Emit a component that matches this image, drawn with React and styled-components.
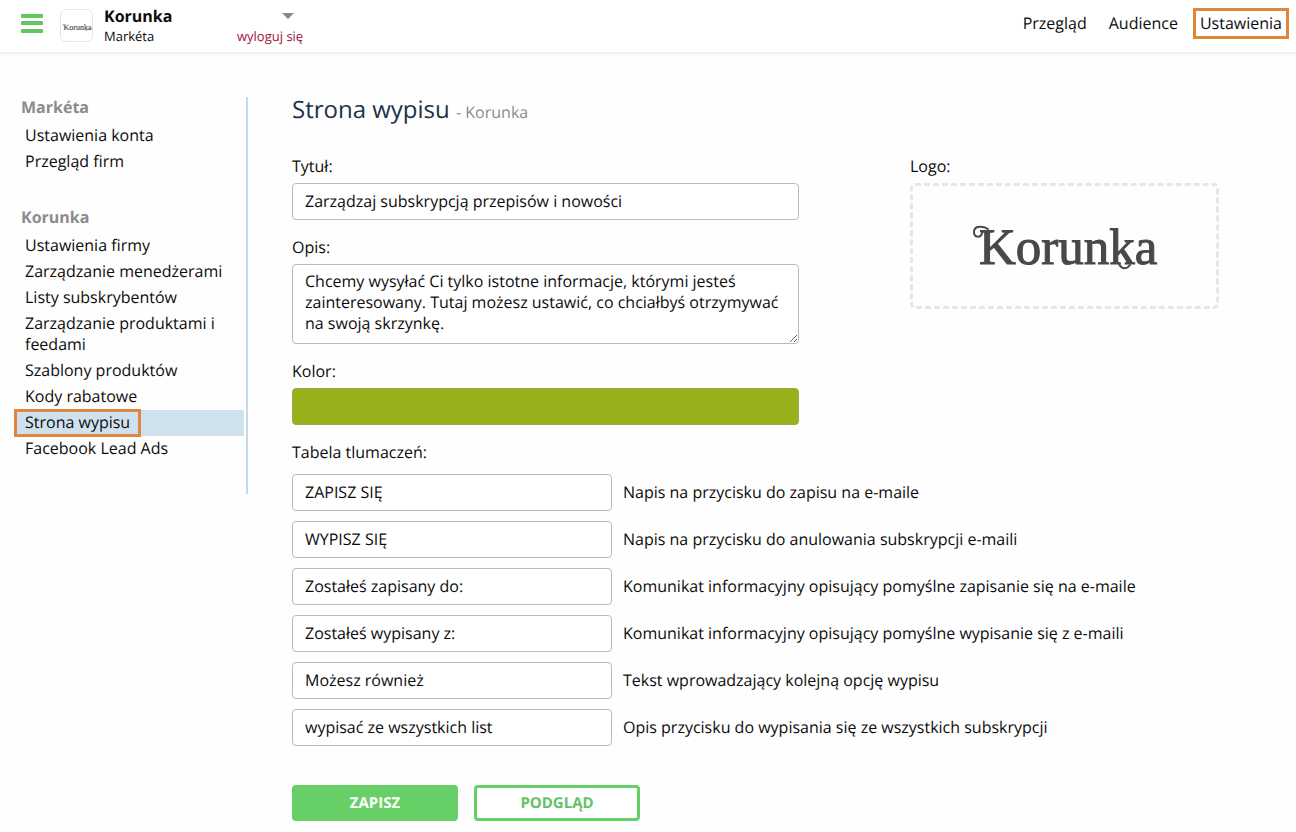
import React from 'react';
import styled, { createGlobalStyle } from 'styled-components';

const accountLinks = ['Ustawienia konta', 'Przegląd firm'];

const companyLinks = [
  'Ustawienia firmy',
  'Zarządzanie menedżerami',
  'Listy subskrybentów',
  'Zarządzanie produktami i feedami',
  'Szablony produktów',
  'Kody rabatowe',
  'Strona wypisu',
  'Facebook Lead Ads',
];

const translations = [
  { id: 'subscribe', value: 'ZAPISZ SIĘ', label: 'Napis na przycisku do zapisu na e-maile' },
  { id: 'unsubscribe', value: 'WYPISZ SIĘ', label: 'Napis na przycisku do anulowania subskrypcji e-maili' },
  { id: 'subscribed', value: 'Zostałeś zapisany do:', label: 'Komunikat informacyjny opisujący pomyślne zapisanie się na e-maile' },
  { id: 'unsubscribed', value: 'Zostałeś wypisany z:', label: 'Komunikat informacyjny opisujący pomyślne wypisanie się z e-maili' },
  { id: 'also', value: 'Możesz również', label: 'Tekst wprowadzający kolejną opcję wypisu' },
  { id: 'all', value: 'wypisać ze wszystkich list', label: 'Opis przycisku do wypisania się ze wszystkich subskrypcji' },
];

function KorunkaLogo({ width }) {
  return (
    <svg width={width} viewBox="0 0 190 70" role="img" aria-label="Korunka">
      <text x="9" y="53" fontFamily="'Liberation Serif', serif" fontSize="51" fill="#484848" stroke="#484848" strokeWidth="1">
        Korunka
      </text>
      <g fill="none" stroke="#484848" strokeWidth="2" strokeLinecap="round">
        <path d="M18 18C13 15 4 14 4 21c0 6 7 6 8 1" />
        <path d="M149 53c3 6 8 5 11 1" />
      </g>
    </svg>
  );
}

function MenuSection({ title, links }) {
  return (
    <Section>
      <SectionTitle>{title}</SectionTitle>
      {links.map(link => (
        <SideLink href="#" key={link} $active={link === 'Strona wypisu'}>
          {link === 'Strona wypisu' ? <Marked>{link}</Marked> : link}
        </SideLink>
      ))}
    </Section>
  );
}

export default function App() {
  return (
    <>
      <GlobalStyle />
      <Header>
        <MenuButton aria-label="Menu">
          <svg width="22" height="19" viewBox="0 0 22 19" fill="#62c462">
            <rect width="22" height="4" rx="1" />
            <rect y="7" width="22" height="4" rx="1" />
            <rect y="15" width="22" height="4" rx="1" />
          </svg>
        </MenuButton>
        <Avatar><KorunkaLogo width={30} /></Avatar>
        <Account>
          <strong>Korunka</strong>
          <span>Markéta</span>
        </Account>
        <Logout>
          <AccountToggle aria-label="Zmień konto">
            <svg width="12" height="6" viewBox="0 0 12 6"><path d="M0 0h12L6 6z" fill="#888" /></svg>
          </AccountToggle>
          <a href="#">wyloguj się</a>
        </Logout>
        <Nav>
          <NavLink href="#">Przegląd</NavLink>
          <NavLink href="#">Audience</NavLink>
          <NavLink href="#" $active>Ustawienia</NavLink>
        </Nav>
      </Header>

      <Page>
        <Sidebar>
          <MenuSection title="Markéta" links={accountLinks} />
          <MenuSection title="Korunka" links={companyLinks} />
        </Sidebar>

        <Content>
          <Title>Strona wypisu <small>- Korunka</small></Title>
          <Columns>
            <Fields>
              <Field>
                <label htmlFor="title">Tytuł:</label>
                <Input id="title" defaultValue="Zarządzaj subskrypcją przepisów i nowości" />
              </Field>
              <Field>
                <label htmlFor="description">Opis:</label>
                <TextArea
                  id="description"
                  defaultValue="Chcemy wysyłać Ci tylko istotne informacje, którymi jesteś zainteresowany. Tutaj możesz ustawić, co chciałbyś otrzymywać na swoją skrzynkę."
                />
              </Field>
              <Field>
                <label htmlFor="color">Kolor:</label>
                <ColorInput id="color" type="color" defaultValue="#97b11a" />
              </Field>
            </Fields>
            <Field as="section">
              <span>Logo:</span>
              <LogoBox><KorunkaLogo width={190} /></LogoBox>
            </Field>
          </Columns>

          <TableTitle>Tabela tlumaczeń:</TableTitle>
          <Translations>
            {translations.map(({ id, value, label }) => (
              <Translation key={id}>
                <Input id={id} defaultValue={value} />
                <label htmlFor={id}>{label}</label>
              </Translation>
            ))}
          </Translations>

          <Actions>
            <Button $primary>ZAPISZ</Button>
            <Button>PODGLĄD</Button>
          </Actions>
        </Content>
      </Page>
    </>
  );
}

const GlobalStyle = createGlobalStyle`
  * {
    box-sizing: border-box;
  }

  body {
    margin: 0;
    background: #fefefe;
    color: #0c0c0c;
    font: 16px/21px "Open Sans", "Noto Sans", sans-serif;
    text-rendering: geometricPrecision;
  }

  a {
    color: inherit;
    text-decoration: none;
  }

  button, input, textarea {
    font: inherit;
    color: inherit;
    text-rendering: inherit;
  }
`;

const Header = styled.header`
  display: flex;
  align-items: center;
  height: 52px;
  padding: 0 7px 5px 21px;
  background: #fff;
  box-shadow: 0 1px 4px rgba(0, 0, 0, .1);
`;

const MenuButton = styled.button`
  display: flex;
  padding: 0;
  border: 0;
  background: none;
`;

const Avatar = styled.div`
  display: flex;
  align-items: center;
  justify-content: center;
  width: 33px;
  height: 33px;
  margin: 4px 11px 0 17px;
  padding-top: 4px;
  border: 1px solid #e6e6e6;
  border-radius: 6px;
`;

const Account = styled.div`
  display: flex;
  flex-direction: column;
  width: 133px;
  line-height: 20px;
  padding-top: 4px;

  span {
    font-size: 13px;
  }
`;

const Logout = styled.div`
  display: flex;
  flex-direction: column;
  color: #a5123a;
  font-size: 13px;
  line-height: 20px;
  padding-top: 4px;
`;

const AccountToggle = styled.button`
  display: flex;
  align-items: center;
  align-self: flex-end;
  height: 20px;
  margin-right: 9px;
  padding: 0;
  border: 0;
  background: none;
`;

const Nav = styled.nav`
  display: flex;
  align-items: center;
  gap: 8px;
  margin-left: auto;
`;

const NavLink = styled.a`
  padding: 2px 4px;
  border: 3px solid ${({ $active }) => ($active ? '#df873f' : 'transparent')};
`;

const Page = styled.div`
  display: flex;
  align-items: flex-start;
  padding: 45px 77px 11px 15px;
`;

const Sidebar = styled.aside`
  flex: 0 0 233px;
  min-height: 396px;
  padding-right: 2px;
  border-right: 2px solid #c6d9e8;
`;

const Section = styled.section`
  display: flex;
  flex-direction: column;
  margin-bottom: 32px;
`;

const SectionTitle = styled.h2`
  margin: 0 0 5px 6px;
  color: #8c8c8c;
  font-size: 16px;
  line-height: 21px;
`;

const SideLink = styled.a`
  padding: ${({ $active }) => ($active ? '0' : '2px 10px 3px')};
  background: ${({ $active }) => ($active ? '#cfe1ec' : 'none')};
`;

const Marked = styled.span`
  display: inline-block;
  padding: 2px 10px 3px;
  outline: 3px solid #df873f;
  outline-offset: -2px;
`;

const Content = styled.main`
  flex: 1;
  min-width: 0;
  padding-left: 44px;
`;

const Title = styled.h1`
  margin: 0 0 33px;
  color: #1b3247;
  font-size: 24px;
  font-weight: 400;
  line-height: 26px;

  small {
    color: #8c8c8c;
    font-size: 16px;
    line-height: 16px;
  }
`;

const Columns = styled.div`
  display: grid;
  grid-template-columns: 507fr 309fr;
  align-items: start;
  gap: 111px;
`;

const Fields = styled.div`
  display: flex;
  flex-direction: column;
  gap: 17px;
`;

const Field = styled.div`
  display: flex;
  flex-direction: column;
  gap: 6px;
`;

const Input = styled.input`
  width: 100%;
  height: 37px;
  padding: 0 12px 2px;
  border: 1px solid #bbb;
  border-radius: 4px;
  background: #fff;
`;

const TextArea = styled.textarea`
  width: 100%;
  height: 80px;
  padding: 6px 12px;
  border: 1px solid #bbb;
  border-radius: 4px;
  background: #fff;
  resize: vertical;
  overflow: hidden;
`;

const ColorInput = styled.input`
  width: 100%;
  height: 37px;
  padding: 0;
  border: 1px solid #98a854;
  border-radius: 4px;
  background: #97b11a;

  &::-webkit-color-swatch-wrapper {
    padding: 0;
  }

  &::-webkit-color-swatch {
    border: 0;
    border-radius: 3px;
  }
`;

const LogoBox = styled.div`
  display: flex;
  align-items: center;
  justify-content: center;
  height: 126px;
  border: 3px dashed #e6e6e6;
  border-radius: 5px;
`;

const TableTitle = styled.p`
  margin: 17px 0 11px;
`;

const Translations = styled.div`
  display: flex;
  flex-direction: column;
  gap: 10px;
`;

const Translation = styled.div`
  display: grid;
  grid-template-columns: 320px 1fr;
  align-items: center;
  gap: 11px;
`;

const Actions = styled.div`
  display: flex;
  gap: 16px;
  margin-top: 39px;
`;

const Button = styled.button`
  width: 166px;
  height: 36px;
  border: 3px solid #66cf66;
  border-radius: 4px;
  background: ${({ $primary }) => ($primary ? '#66cf66' : '#fff')};
  color: ${({ $primary }) => ($primary ? '#fff' : '#66c166')};
  font-size: 15px;
  font-weight: 700;
  line-height: 20px;
`;
